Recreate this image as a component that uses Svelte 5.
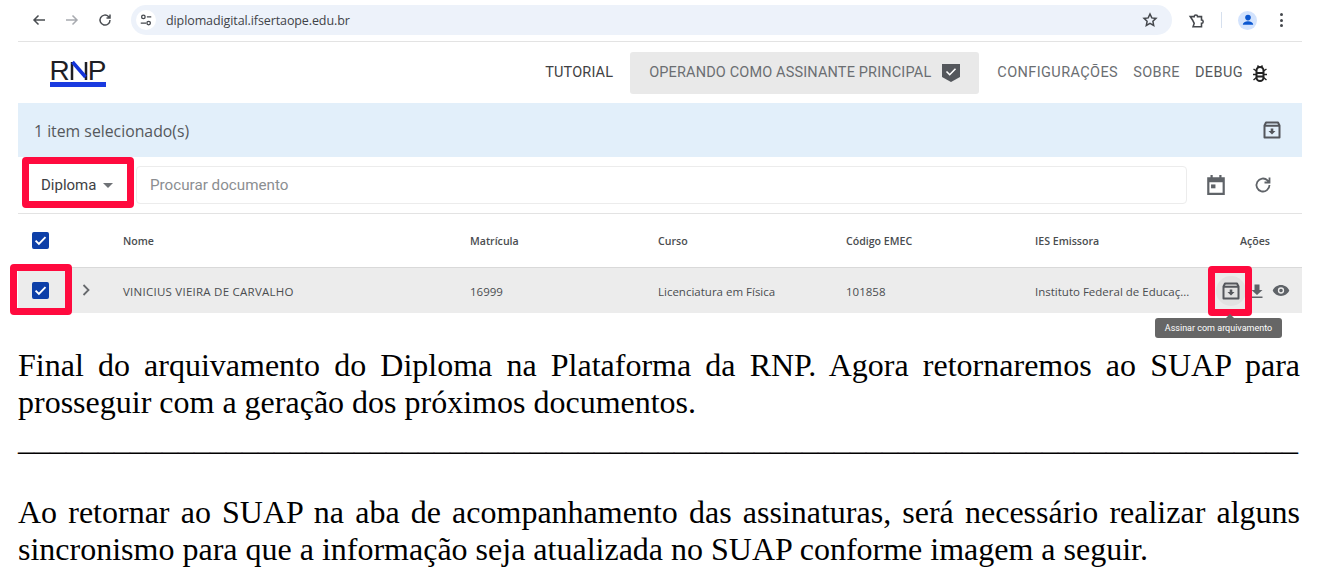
<script>
  const columns = ['Nome', 'Matrícula', 'Curso', 'Código EMEC', 'IES Emissora'];
  const row = ['VINICIUS VIEIRA DE CARVALHO', '16999', 'Licenciatura em Física', '101858', 'Instituto Federal de Educaç...'];
  const rule = '_'.repeat(80);
</script>

<div class="page">
  <div class="shot">
    <div class="chrome">
      <svg class="nav" viewBox="0 0 16 16"><path d="M14 8H3M7.500 3.500 3 8l4.500 4.500" /></svg>
      <svg class="nav off" viewBox="0 0 16 16"><path d="M2 8h11M8.500 3.500 13 8l-4.500 4.500" /></svg>
      <svg class="nav" viewBox="0 0 16 16"><path d="M13 8a5 5 0 1 1-1.500-3.500L13 6M13 2.500V6H9.500" /></svg>
      <div class="url">
        <span class="tune">
          <svg viewBox="0 0 16 16"><circle cx="5" cy="4.500" r="2" /><path d="M9 4.500h5M2 11.500h6" /><circle cx="11" cy="11.500" r="2" /></svg>
        </span>
        <span class="address">diplomadigital.ifsertaope.edu.br</span>
        <svg class="star" viewBox="0 0 16 16"><path d="m8 2 1.800 3.900 4.200.5-3.100 2.900.8 4.200L8 11.400l-3.700 2.100.8-4.200L2 6.400l4.200-.5z" /></svg>
      </div>
      <svg class="ext" viewBox="0 0 16 16"><path d="M2 5h3.500a1.500 1.500 0 0 1 3 0H12v3a1.500 1.500 0 0 1 0 3v3H4.500L5.500 11 4 8 2 5z" /></svg>
      <span class="sep"></span>
      <span class="avatar">
        <svg viewBox="0 0 20 20"><circle cx="10" cy="7" r="3.500" /><path d="M3.500 16c0-3 3-4.500 6.500-4.500s6.500 1.500 6.500 4.500z" /></svg>
      </span>
      <span class="dots"><i></i><i></i><i></i></span>
    </div>

    <header class="top">
      <div class="logo">
        <div class="letters">R<span class="n"><svg viewBox="0 0 18 20"><path d="M2 2v18M16 2v18" /><path class="blue" d="M2.500 2l13 15" /></svg></span>P</div>
        <div class="strip"></div>
      </div>
      <nav>
        <span class="link dark">TUTORIAL</span>
        <span class="role">OPERANDO COMO ASSINANTE PRINCIPAL
          <svg viewBox="0 0 18 20"><path class="shield" d="M0 1h18v13l-9 5-9-5z" /><path class="tick" d="m4.500 8.500 3.200 3.200 5.800-6" /></svg>
        </span>
        <span class="link wide">CONFIGURAÇÕES</span>
        <span class="link wide sobre">SOBRE</span>
        <span class="link wide debug">DEBUG
          <svg viewBox="0 0 16 18">
            <path class="bug" d="M4.500 6.500a3.500 3.500 0 0 1 7 0v7a3.500 3.500 0 0 1-7 0zM4.500 9h7M4.500 12.500h7" />
            <path class="legs" d="M1.500 5 4.500 7M14.500 5 11.500 7M1 10.500h3.500M15 10.500h-3.500M1.500 16l3-2.500M14.500 16l-3-2.500M5.500 1.500 7 3.500M10.500 1.500 9 3.500" />
          </svg>
        </span>
      </nav>
    </header>

    <div class="selected">
      <span class="count">1 item selecionado(s)</span>
      <svg class="archive" viewBox="0 0 20 20"><use href="#arch" /></svg>
    </div>

    <div class="search">
      <span class="select">Diploma <i class="caret"></i></span>
      <span class="input">Procurar documento</span>
      <svg class="cal" viewBox="0 0 20 20"><path d="M5 1h2v2h6V1h2v2h3v16H2V3h3zM4 7.500V17h12V7.500z" /><rect x="5.500" y="9.500" width="4" height="3.500" /></svg>
      <svg class="reload" viewBox="0 0 20 20"><path d="M16.500 10a6.500 6.500 0 1 1-2-4.700L16.500 7.500M16.500 2.500v5h-5" /></svg>
    </div>

    <div class="grid head">
      <span class="check"><svg viewBox="0 0 18 18"><use href="#tick" /></svg></span>
      <span></span>
      {#each columns as col}<span>{col}</span>{/each}
      <span class="acts">Ações</span>
    </div>

    <div class="grid item">
      <span class="check"><svg viewBox="0 0 18 18"><use href="#tick" /></svg></span>
      <svg class="chev" viewBox="0 0 10 14"><path d="m2.500 2 5 5-5 5" /></svg>
      {#each row as cell, i}<span class="cell" class:caps={i === 0}>{cell}</span>{/each}
      <span class="icons">
        <span class="halo"><svg class="archive" viewBox="0 0 20 20"><use href="#arch" /></svg></span>
        <svg class="dl" viewBox="0 0 16 16"><path d="M5.500 1.500h5V7h3L8 12 2.500 7h3zM2.500 13.500h11V15h-11z" /></svg>
        <svg class="eye" viewBox="0 0 20 14"><path fill-rule="evenodd" d="M10 1c4.200 0 7.600 2.500 9.200 6-1.600 3.500-5 6-9.200 6S2.400 10.500.8 7C2.400 3.500 5.800 1 10 1zm0 2.500a3.500 3.500 0 1 0 0 7 3.500 3.500 0 0 0 0-7zM10 5a2 2 0 1 1 0 4 2 2 0 0 1 0-4z" /></svg>
      </span>
    </div>
  </div>

  <div class="doc">
    <p class="first">Final do arquivamento do Diploma na Plataforma da RNP. Agora retornaremos ao SUAP para prosseguir com a geração dos próximos documentos.</p>
    <p class="rule">{rule}</p>
    <p class="second">Ao retornar ao SUAP na aba de acompanhamento das assinaturas, será necessário realizar alguns sincronismo para que a informação seja atualizada no SUAP conforme imagem a seguir.</p>
  </div>

  <span class="mark m1"></span>
  <span class="mark m2"></span>
  <span class="mark m3"></span>
  <span class="tip">Assinar com arquivamento</span>

  <svg class="defs" width="0" height="0">
    <symbol id="arch" viewBox="0 0 20 20">
      <path fill="none" stroke="#54575c" stroke-width="2" stroke-linejoin="round" d="M2.500 5.500 4 2.500h12l1.500 3v12h-15zM2.500 5.800h15" />
      <path fill="#54575c" d="M8.700 8.500h2.600v2.500h2.200L10 14.500 6.500 11h2.200z" />
    </symbol>
    <symbol id="tick" viewBox="0 0 18 18">
      <rect width="18" height="18" rx="2" fill="#0d3fa8" />
      <path fill="none" stroke="#fff" stroke-width="2" d="m3.800 9.200 3.500 3.500 7-7.200" />
    </symbol>
  </svg>
</div>

<style>
  :global(body) {
    margin: 0;
    background: #fff;
  }
  .page {
    position: relative;
    width: 1317px;
    height: 577px;
    overflow: hidden;
  }
  .shot {
    margin: 0 15px 0 18px;
    font-family: Roboto, sans-serif;
  }
  .chrome {
    display: flex;
    align-items: center;
    height: 40px;
    border-bottom: 1px solid #e3e3e3;
    padding: 0 13px 1px;
    box-sizing: content-box;
  }
  .nav {
    width: 16px;
    height: 16px;
    margin-right: 17px;
    fill: none;
    stroke: #4a4d52;
    stroke-width: 1.500;
  }
  .nav.off {
    stroke: #a8abb0;
  }
  .url {
    display: flex;
    align-items: center;
    flex: 0 0 1041px;
    height: 30px;
    margin-left: 1px;
    border-radius: 15px;
    background: #edf2fa;
    box-sizing: border-box;
    padding: 0 14px 0 5px;
  }
  .tune {
    display: flex;
    align-items: center;
    justify-content: center;
    width: 20px;
    height: 20px;
    border-radius: 50%;
    background: #fff;
  }
  .tune svg {
    width: 14px;
    height: 14px;
    fill: none;
    stroke: #45484d;
    stroke-width: 1.500;
  }
  .address {
    margin-left: 10px;
    font-size: 12.500px;
    color: #3f4348;
    font-family: "Open Sans", sans-serif;
    flex: 1;
    letter-spacing: -0.100px;
  }
  .star {
    width: 16px;
    height: 16px;
    fill: none;
    stroke: #45484d;
    stroke-width: 1.500;
  }
  .ext {
    width: 18px;
    height: 18px;
    margin-left: 16px;
    fill: none;
    stroke: #45484d;
    stroke-width: 1.400;
  }
  .sep {
    width: 1px;
    height: 16px;
    margin-left: 15px;
    background: #d6e0ee;
  }
  .avatar {
    display: flex;
    align-items: center;
    justify-content: center;
    width: 19px;
    height: 19px;
    margin-left: 16px;
    border-radius: 50%;
    background: #d3e3fd;
  }
  .avatar svg {
    width: 16px;
    height: 16px;
    fill: #0b57d0;
  }
  .dots {
    display: flex;
    flex-direction: column;
    gap: 2.500px;
    margin-left: 23px;
  }
  .dots i {
    width: 3px;
    height: 3px;
    border-radius: 50%;
    background: #45484d;
  }
  .top {
    display: flex;
    align-items: center;
    justify-content: space-between;
    height: 61px;
    padding: 0 34px 0 32px;
  }
  .logo {
    width: 56px;
  }
  .letters {
    display: flex;
    align-items: center;
    justify-content: center;
    font-family: "Liberation Sans", sans-serif;
    font-size: 28px;
    line-height: 23px;
    color: #1e1e24;
  }
  .n svg {
    display: block;
    width: 18px;
    height: 20px;
    fill: none;
    stroke: #1e1e24;
    stroke-width: 2.500;
  }
  .n .blue {
    stroke: #1434d8;
    stroke-width: 3.500;
  }
  .strip {
    height: 5px;
    background: #1a3be0;
  }
  nav {
    display: flex;
    align-items: center;
    font-size: 14.500px;
    letter-spacing: 0.150px;
    color: #6b6e72;
  }
  .dark {
    color: #3f4144;
  }
  .wide {
    letter-spacing: 0.400px;
  }
  .role {
    display: flex;
    align-items: center;
    gap: 11px;
    height: 42px;
    margin: 0 18px 0 17px;
    padding: 0 19px;
    border-radius: 3px;
    background: #e9e9e9;
  }
  .role svg {
    width: 18px;
    height: 20px;
  }
  .shield {
    fill: #54575c;
  }
  .tick {
    fill: none;
    stroke: #fff;
    stroke-width: 1.600;
  }
  .sobre {
    margin-left: 15px;
  }
  .debug {
    display: flex;
    align-items: center;
    gap: 9px;
    margin-left: 15px;
    color: #55585b;
  }
  .bug {
    fill: none;
    stroke: #222;
    stroke-width: 2;
  }
  .legs {
    fill: none;
    stroke: #222;
    stroke-width: 1.500;
  }
  .debug svg {
    width: 16px;
    height: 18px;
  }
  .selected {
    display: flex;
    align-items: center;
    justify-content: space-between;
    height: 54px;
    padding: 0 20px 0 16px;
    background: #e2effa;
    font-family: "Open Sans", sans-serif;
    font-size: 15.800px;
    color: #55585c;
  }
  .count {
    padding-top: 1px;
  }
  .archive {
    display: block;
    width: 20px;
    height: 20px;
  }
  .search {
    display: flex;
    align-items: center;
    height: 56px;
    border-bottom: 1px solid #e3e3e3;
    padding: 0 29px 0 23px;
    box-sizing: content-box;
    font-size: 15.200px;
  }
  .select {
    display: flex;
    align-items: center;
    gap: 7px;
    width: 95px;
    color: #3e4144;
    font-size: 15px;
  }
  .caret {
    width: 0;
    height: 0;
    border: 5px solid transparent;
    border-top-color: #6f7276;
    margin-top: 5px;
  }
  .input {
    display: flex;
    align-items: center;
    box-sizing: border-box;
    width: 1051px;
    height: 38px;
    padding-left: 13px;
    border: 1px solid #ececec;
    border-radius: 4px;
    color: #8b8e91;
  }
  .cal {
    width: 22px;
    height: 22px;
    margin-left: 18px;
    fill: #5f6368;
  }
  .reload {
    width: 20px;
    height: 20px;
    margin-left: 26px;
    fill: none;
    stroke: #5f6368;
    stroke-width: 1.800;
  }
  .grid {
    display: grid;
    grid-template-columns: 48px 57px 347px 188px 188px 189px 172px 95px;
    align-items: center;
    font-family: "Open Sans", sans-serif;
    color: #4a4d50;
  }
  .head {
    height: 53px;
    border-bottom: 1px solid #d9d9d9;
    font-size: 10.600px;
    font-weight: 600;
  }
  .item {
    height: 45px;
    background: #ececec;
    font-size: 11.500px;
  }
  .cell {
    padding-top: 1px;
  }
  .caps {
    letter-spacing: 0.250px;
  }
  .check {
    display: block;
    padding-left: 14px;
  }
  .check svg {
    display: block;
    width: 17px;
    height: 17px;
  }
  .chev {
    width: 10px;
    height: 14px;
    margin-left: 15px;
    margin-top: -2px;
    fill: none;
    stroke: #66696c;
    stroke-width: 1.800;
  }
  .acts {
    padding-left: 33px;
  }
  .icons {
    display: flex;
    align-items: center;
    margin-left: 9px;
  }
  .halo {
    display: flex;
    align-items: center;
    justify-content: center;
    width: 30px;
    height: 30px;
    border-radius: 50%;
    background: #e2e2e2;
  }
  .dl {
    width: 16px;
    height: 16px;
    margin-left: 3px;
    fill: #5f6368;
  }
  .eye {
    width: 18px;
    height: 13px;
    margin-left: 7px;
    fill: #5f6368;
  }
  .doc {
    margin: 34px 17px 0 18px;
    font-family: "Liberation Serif", serif;
    font-size: 32px;
    line-height: 37px;
    color: #000;
  }
  .doc p {
    margin: 0;
    text-align: justify;
  }
  .doc .rule {
    margin-top: 0;
    text-align: left;
    white-space: nowrap;
  }
  .doc .second {
    margin-top: 36px;
  }
  .mark {
    position: absolute;
    box-sizing: border-box;
    border: 7px solid #ff0a3e;
    border-radius: 4px;
  }
  .m1 {
    left: 22px;
    top: 157px;
    width: 112px;
    height: 51px;
  }
  .m2 {
    left: 10px;
    top: 264px;
    width: 62px;
    height: 51px;
  }
  .m3 {
    left: 1208px;
    top: 266px;
    width: 44px;
    height: 50px;
  }
  .tip {
    position: absolute;
    left: 1155px;
    top: 318px;
    width: 127px;
    height: 20px;
    border-radius: 3px;
    background: #666;
    color: #fff;
    font-family: Roboto, sans-serif;
    font-size: 9px;
    line-height: 20px;
    text-align: center;
  }
  .tip::before {
    content: "";
    position: absolute;
    left: 71px;
    top: -4px;
    border: 4px solid transparent;
    border-top: 0;
    border-bottom-color: #666;
  }
  .defs {
    position: absolute;
  }
</style>
